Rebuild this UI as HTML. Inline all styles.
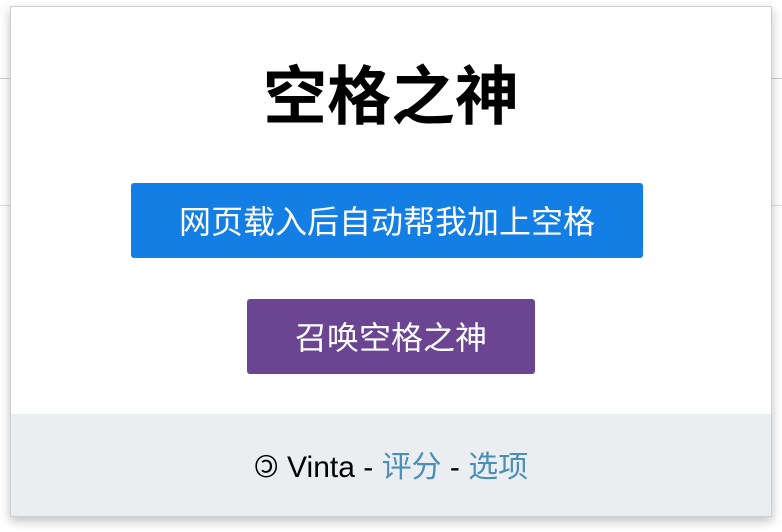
<!DOCTYPE html>
<html><head><meta charset="utf-8"><style>
body{margin:0;width:782px;height:532px;position:relative;background:#fff;overflow:hidden;font-family:"Liberation Sans","Noto Sans CJK SC",sans-serif}
.bgl{position:absolute;left:0;top:78px;width:782px;height:1px;background:#ccc}
.bgb{position:absolute;left:0;top:205px;width:782px;height:1px;background:#ddd}
.pop{position:absolute;left:10px;top:6px;width:762px;height:511px;background:#fff;border:1px solid #cfcfcf;box-sizing:border-box;box-shadow:0 4px 10px rgba(0,0,0,.25)}
h1{position:absolute;left:0;right:0;top:55px;margin:0;text-align:center;font-size:64px;line-height:70px;font-weight:bold;color:#000}
.btn{position:absolute;color:#fff;text-align:center;border-radius:3px;font-size:32px;line-height:78px;height:75px}
.b1{left:120px;top:176px;width:512px;background:#137ee4}
.b2{left:236px;top:292px;width:288px;background:#6b4592}
.foot{position:absolute;left:0;right:0;bottom:0;height:102px;background:#eaeef1;text-align:center;font-size:30px;line-height:108px;color:#000}
.foot a{color:#4a8fb8;text-decoration:none}
</style></head><body>
<div class="bgl"></div><div class="bgb"></div>
<div class="pop">
<h1>空格之神</h1>
<div class="btn b1">网页载入后自动帮我加上空格</div>
<div class="btn b2">召唤空格之神</div>
<div class="foot">&#x1F12F; Vinta - <a>评分</a> - <a>选项</a></div>
</div>
</body></html>
